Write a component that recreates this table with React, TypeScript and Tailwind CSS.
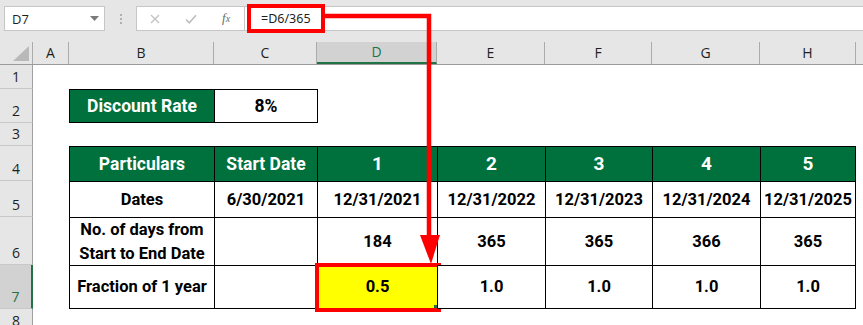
import React from "react";

const W = [36, 145, 103, 120, 108, 107, 108, 96];
const LETTERS = ["A", "B", "C", "D", "E", "F", "G", "H"];
const HEIGHTS = [24, 34, 23, 35, 36, 48, 44, 24];

const ui = { fontFamily: '"Open Sans", "Noto Sans", sans-serif' };
const cal = { fontFamily: 'Roboto, "Noto Sans", sans-serif' };

function RowHeader({ n, h }: { n: number; h: number }) {
  const sel = n === 7;
  return (
    <div
      className={
        "flex w-[33px] shrink-0 items-end justify-center pb-[3px] text-[14px] leading-[16px] border-b border-[#c8c8c8] " +
        (sel
          ? "bg-[#d2d2d2] text-[#217346] border-r-2 border-r-[#217346]"
          : "bg-[#e6e6e6] text-[#1f1f1f] border-r border-r-[#a0a0a0]")
      }
      style={{ ...ui, height: h }}
    >
      {n}
    </div>
  );
}

type Cell = {
  text?: React.ReactNode;
  kind?: "green" | "white" | "yellow" | "none";
  size?: string;
};

function TableRow({
  n,
  cells,
  last,
}: {
  n: number;
  cells: Cell[];
  last?: boolean;
}) {
  const h = HEIGHTS[n - 1];
  return (
    <div className="flex" style={{ height: h }}>
      <RowHeader n={n} h={h} />
      {cells.map((c, i) => {
        const w = W[i];
        if (!c.kind || c.kind === "none") {
          return <div key={i} className="shrink-0 bg-white" style={{ width: w }} />;
        }
        const bg =
          c.kind === "green"
            ? "bg-[#00703c] text-white"
            : c.kind === "yellow"
            ? "bg-[#ffff00] text-black"
            : "bg-white text-black";
        const isLastCol = i === 7;
        return (
          <div
            key={i}
            className={
              "relative flex shrink-0 items-center justify-center text-center font-bold border-l border-t border-black " +
              bg +
              (last ? " border-b" : "") +
              (isLastCol ? " border-r" : "") +
              " " +
              (c.size ?? "text-[16.5px] leading-[24px]")
            }
            style={{ ...cal, width: w }}
          >
            {c.text}
            {c.kind === "yellow" && (
              <>
                <div className="pointer-events-none absolute left-[-3px] top-[-3px] right-[-4px] bottom-[-4px] border-[4px] border-[#ff0000]" />
                <div className="absolute bottom-0 right-0 h-[3px] w-[3px] bg-[#217346]" />
              </>
            )}
          </div>
        );
      })}
      <div className="flex-1 bg-white" />
    </div>
  );
}

export default function App() {
  const none: Cell = { kind: "none" };
  return (
    <div className="relative h-[325px] w-[863px] overflow-hidden bg-white" style={ui}>
      {/* Formula bar */}
      <div className="flex h-[42px] bg-[#e6e6e6] pt-[6px]">
        <div className="ml-[4px] flex h-[25px] w-[101px] items-center justify-between border border-[#c6c6c6] bg-white pl-[7px] pr-[5px]">
          <span className="text-[13px] leading-[16px] text-[#1f1f1f]">D7</span>
          <svg width="9" height="5" viewBox="0 0 9 5">
            <polygon points="0,0 9,0 4.5,5" fill="#7a7a7a" />
          </svg>
        </div>
        <div className="flex h-[25px] w-[31px] flex-col items-center justify-center gap-[2px]">
          <div className="h-[2px] w-[2px] bg-[#b0b0b0]" />
          <div className="h-[2px] w-[2px] bg-[#b0b0b0]" />
          <div className="h-[2px] w-[2px] bg-[#b0b0b0]" />
        </div>
        <div className="flex h-[25px] w-[109px] items-center border border-[#c6c6c6] bg-white pl-[13px]">
          <svg width="10" height="10" viewBox="0 0 10 10">
            <path d="M1 1 L9 9 M9 1 L1 9" stroke="#c2c2c2" strokeWidth="1.3" />
          </svg>
          <svg className="ml-[25px]" width="12" height="10" viewBox="0 0 12 10">
            <path d="M1 5.5 L4.3 8.8 L11 1.2" stroke="#bdbdbd" strokeWidth="1.6" fill="none" />
          </svg>
          <span
            className="ml-[25px] text-[13px] italic leading-[16px] text-[#6b6b6b]"
            style={{ fontFamily: '"Liberation Serif", serif' }}
          >
            f<span className="text-[10px]">x</span>
          </span>
        </div>
        <div className="relative flex h-[25px] flex-1 items-center border-y border-[#c6c6c6] bg-white pl-[16px]">
          <span className="text-[12.5px] leading-[16px] text-[#1f1f1f]" style={{ fontFamily: '"Noto Sans", sans-serif' }}>
            =D6/365
          </span>
          <div className="absolute left-[2px] top-[-3px] h-[29px] w-[78px] border-[4px] border-[#ff0000]" />
        </div>
      </div>

      {/* Column headers */}
      <div className="flex h-[23px] border-b border-[#9b9b9b] bg-[#e6e6e6]">
        <div className="relative w-[33px] shrink-0 border-r border-[#ababab]">
          <svg className="absolute right-[3px] bottom-[3px]" width="16" height="15" viewBox="0 0 16 15">
            <polygon points="16,0 16,15 0,15" fill="#b9b9b9" />
          </svg>
        </div>
        {LETTERS.map((l, i) => (
          <div
            key={l}
            className={
              "flex shrink-0 items-center justify-center border-r border-[#ababab] text-[14px] leading-[16px] " +
              (l === "D"
                ? "bg-[#d2d2d2] text-[#217346] border-b-2 border-b-[#217346]"
                : "text-[#1f1f1f]")
            }
            style={{ width: W[i] }}
          >
            {l}
          </div>
        ))}
        <div className="flex-1" />
      </div>

      {/* Row 1 */}
      <TableRow n={1} cells={[none, none, none, none, none, none, none, none]} />
      {/* Row 2 */}
      <div className="flex" style={{ height: HEIGHTS[1] }}>
        <RowHeader n={2} h={HEIGHTS[1]} />
        <div className="shrink-0" style={{ width: W[0] }} />
        <div
          className="flex shrink-0 items-center justify-center border-y border-l border-black bg-[#00703c] text-[17.5px] font-bold text-white"
          style={{ ...cal, width: W[1], height: 34 }}
        >
          Discount Rate
        </div>
        <div
          className="flex shrink-0 items-center justify-center border border-black bg-white text-[17.5px] font-bold text-black"
          style={{ ...cal, width: W[2] + 1, height: 34 }}
        >
          8%
        </div>
        <div className="flex-1" />
      </div>
      {/* Row 3 */}
      <TableRow n={3} cells={[none, none, none, none, none, none, none, none]} />
      {/* Row 4 */}
      <TableRow
        n={4}
        cells={[
          none,
          { kind: "green", text: "Particulars", size: "text-[17.5px]" },
          { kind: "green", text: "Start Date", size: "text-[17.5px]" },
          { kind: "green", text: "1", size: "text-[19px]" },
          { kind: "green", text: "2", size: "text-[19px]" },
          { kind: "green", text: "3", size: "text-[19px]" },
          { kind: "green", text: "4", size: "text-[19px]" },
          { kind: "green", text: "5", size: "text-[19px]" },
        ]}
      />
      {/* Row 5 */}
      <TableRow
        n={5}
        cells={[
          none,
          { kind: "white", text: "Dates" },
          { kind: "white", text: "6/30/2021" },
          { kind: "white", text: "12/31/2021" },
          { kind: "white", text: "12/31/2022" },
          { kind: "white", text: "12/31/2023" },
          { kind: "white", text: "12/31/2024" },
          { kind: "white", text: "12/31/2025" },
        ]}
      />
      {/* Row 6 */}
      <TableRow
        n={6}
        cells={[
          none,
          {
            kind: "white",
            text: (
              <span>
                No. of days from
                <br />
                Start to End Date
              </span>
            ),
          },
          { kind: "white", text: "" },
          { kind: "white", text: "184" },
          { kind: "white", text: "365" },
          { kind: "white", text: "365" },
          { kind: "white", text: "366" },
          { kind: "white", text: "365" },
        ]}
      />
      {/* Row 7 */}
      <TableRow
        n={7}
        last
        cells={[
          none,
          { kind: "white", text: "Fraction of 1 year" },
          { kind: "white", text: "" },
          { kind: "yellow", text: "0.5" },
          { kind: "white", text: "1.0" },
          { kind: "white", text: "1.0" },
          { kind: "white", text: "1.0" },
          { kind: "white", text: "1.0" },
        ]}
      />
      {/* Row 8 */}
      <TableRow n={8} cells={[none, none, none, none, none, none, none, none]} />

      {/* Arrow overlay */}
      <svg className="pointer-events-none absolute left-0 top-0" width="863" height="325" viewBox="0 0 863 325">
        <polyline points="325,16 429,16 429,238" fill="none" stroke="#ff0000" strokeWidth="4.5" />
        <polygon points="420,235 440,235 431,264" fill="#ff0000" />
      </svg>
    </div>
  );
}
